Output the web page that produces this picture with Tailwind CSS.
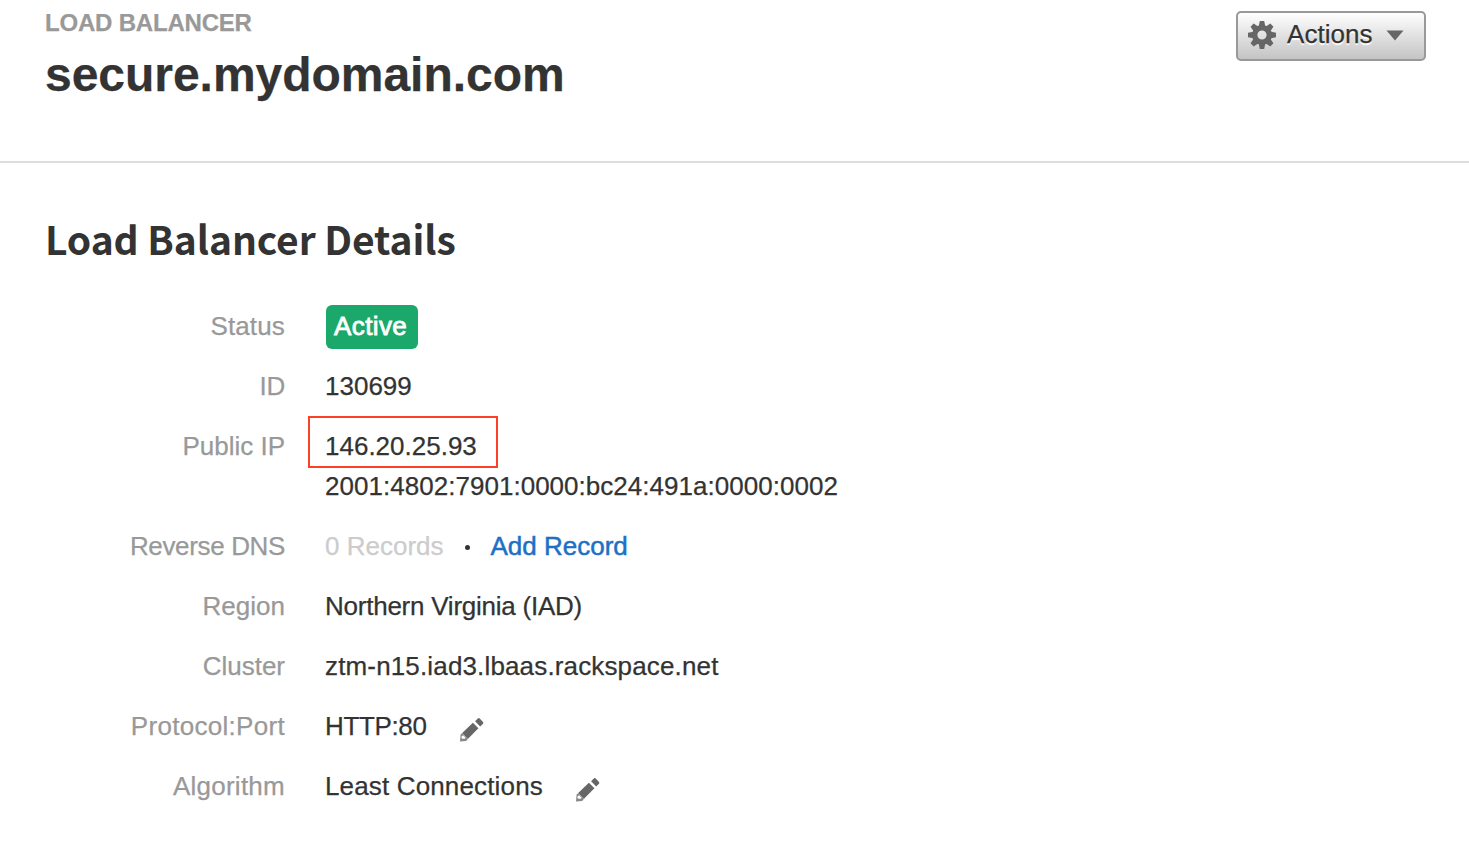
<!DOCTYPE html>
<html lang="en">
<head>
<meta charset="utf-8">
<title>Load Balancer Details</title>
<script src="https://cdn.jsdelivr.net/npm/@tailwindcss/browser@4"></script>
</head>
<body class="h-screen overflow-hidden bg-white font-['Liberation_Sans',Arial,sans-serif] text-[26px] leading-10 text-[#333] [-webkit-text-stroke:0.25px_currentColor]">
<svg class="hidden">
  <symbol id="pencil" viewBox="0 0 26 26">
    <path fill="#666" d="M16.1 4.2 18.8 1.5Q19.8 .7 20.7 1.6L24 4.9Q24.7 5.8 24 6.7L21.2 9.4ZM3.2 16 13.9 5.8 19.4 11.3 8.8 21.9Z"/>
    <path fill="#888" fill-rule="evenodd" d="M3.2 16 8.8 21.9 7.2 24 1 24.6 1.6 17.6ZM4 18.6A1.6 1.6 0 0 0 4 21.8H5.8L6.6 20.8 4.8 18.8Z"/>
  </symbol>
</svg>
<header class="flex h-[163px] justify-between border-b-2 border-[#ddd] pl-[45px] pr-[43px]">
  <div>
    <p class="pt-2 text-2xl leading-[30px] font-bold tracking-[-0.2px] text-[#999]">LOAD BALANCER</p>
    <h1 class="mt-[9px] text-5xl leading-[56px] font-bold tracking-[-0.03px]">secure.mydomain.com</h1>
  </div>
  <button class="mt-[11px] flex h-[50px] w-[190px] items-center rounded-[5px] border-2 border-[#999] bg-linear-to-b from-white to-[#c4c4c4] pl-[10px]">
    <svg class="mb-[3px] size-7" viewBox="0 0 28 28">
      <g fill="#666">
        <g id="teeth"><path d="M11.8 0h4.4l1.4 7h-7.2ZM11.8 28h4.4l1.4-7h-7.2Z"/><path d="M0 11.8v4.4l7 1.4v-7.2ZM28 11.8v4.4l-7 1.4v-7.2Z"/></g>
        <use href="#teeth" transform="rotate(45 14 14)"/>
        <path fill-rule="evenodd" d="M14 4a10 10 0 1 0 0 20a10 10 0 1 0 0-20ZM14 9.4a4.6 4.6 0 1 1 0 9.2a4.6 4.6 0 1 1 0-9.2Z"/>
      </g>
    </svg>
    <span class="mb-[5px] ml-[11px] tracking-[0.05px] [text-shadow:0_2px_1px_#fff]">Actions</span>
    <svg class="mb-[2px] ml-[13px] h-[11px] w-[18px]" viewBox="0 0 18 11"><path fill="#666" d="M.5 .5h17L9 10.5Z"/></svg>
  </button>
</header>
<main class="pl-[45px]">
  <h2 class="pt-[49px] font-['Noto_Sans_CJK_SC',sans-serif] text-[39px] leading-[52px] font-bold tracking-[-0.1px] [-webkit-text-stroke:0]">Load Balancer Details</h2>
  <dl class="mt-[42px] grid grid-cols-[240px_1fr] gap-x-10 gap-y-5">
    <dt class="text-right tracking-[0.15px] text-[#999]">Status</dt>
    <dd class="flex h-10"><span class="-mt-px ml-px h-11 w-[92px] rounded-[6px] bg-[#1ba96b] pl-2 leading-[42px] tracking-[0.4px] text-white [-webkit-text-stroke:0.8px_white]">Active</span></dd>
    <dt class="text-right tracking-[-0.3px] text-[#999]">ID</dt>
    <dd>130699</dd>
    <dt class="text-right text-[#999]">Public IP</dt>
    <dd><div class="relative">146.20.25.93<span class="absolute -left-[17px] -top-[10px] h-[52px] w-[190px] border-2 border-[#fb4226]"></span></div><div class="tracking-[0.03px]">2001:4802:7901:0000:bc24:491a:0000:0002</div></dd>
    <dt class="text-right tracking-[-0.35px] text-[#999]">Reverse DNS</dt>
    <dd class="flex items-center"><span class="text-[#ccc]">0 Records</span><span class="mt-[3px] ml-[21px] size-[5px] rounded-full bg-[#333]"></span><a class="ml-[21px] text-[#1d70c5] [-webkit-text-stroke:0.5px_#1d70c5]">Add Record</a></dd>
    <dt class="text-right text-[#999]">Region</dt>
    <dd class="tracking-[-0.24px]">Northern Virginia (IAD)</dd>
    <dt class="text-right text-[#999]">Cluster</dt>
    <dd class="tracking-[0.15px]">ztm-n15.iad3.lbaas.rackspace.net</dd>
    <dt class="text-right tracking-[0.3px] text-[#999]">Protocol:Port</dt>
    <dd class="flex items-center"><span class="tracking-[-0.35px]">HTTP:80</span><svg class="mt-2 ml-8 size-[26px]"><use href="#pencil"/></svg></dd>
    <dt class="text-right tracking-[0.25px] text-[#999]">Algorithm</dt>
    <dd class="flex items-center"><span class="tracking-[0.15px]">Least Connections</span><svg class="mt-2 ml-8 size-[26px]"><use href="#pencil"/></svg></dd>
  </dl>
</main>
</body>
</html>
